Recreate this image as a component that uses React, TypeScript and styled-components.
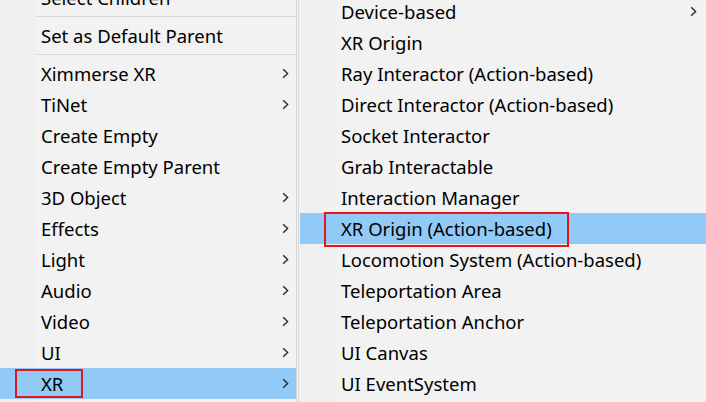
import React from 'react'
import styled, { createGlobalStyle } from 'styled-components'

const GlobalStyle = createGlobalStyle`
  html, body {
    margin: 0;
    padding: 0;
    background: #f2f2f2;
    overflow: hidden;
  }
  body {
    font-family: "Noto Sans", "Open Sans", "Noto Sans CJK SC", sans-serif;
    -webkit-font-smoothing: antialiased;
  }
`

type Entry =
  | { kind: 'item'; label: string; sub?: boolean; active?: boolean; marked?: boolean }
  | { kind: 'sep' }

const mainMenu: Entry[] = [
  { kind: 'item', label: 'Select Children' },
  { kind: 'sep' },
  { kind: 'item', label: 'Set as Default Parent' },
  { kind: 'sep' },
  { kind: 'item', label: 'Ximmerse XR', sub: true },
  { kind: 'item', label: 'TiNet', sub: true },
  { kind: 'item', label: 'Create Empty' },
  { kind: 'item', label: 'Create Empty Parent' },
  { kind: 'item', label: '3D Object', sub: true },
  { kind: 'item', label: 'Effects', sub: true },
  { kind: 'item', label: 'Light', sub: true },
  { kind: 'item', label: 'Audio', sub: true },
  { kind: 'item', label: 'Video', sub: true },
  { kind: 'item', label: 'UI', sub: true },
  { kind: 'item', label: 'XR', sub: true, active: true, marked: true },
]

const xrMenu: Entry[] = [
  { kind: 'item', label: 'Device-based', sub: true },
  { kind: 'item', label: 'XR Origin' },
  { kind: 'item', label: 'Ray Interactor (Action-based)' },
  { kind: 'item', label: 'Direct Interactor (Action-based)' },
  { kind: 'item', label: 'Socket Interactor' },
  { kind: 'item', label: 'Grab Interactable' },
  { kind: 'item', label: 'Interaction Manager' },
  { kind: 'item', label: 'XR Origin (Action-based)', active: true, marked: true },
  { kind: 'item', label: 'Locomotion System (Action-based)' },
  { kind: 'item', label: 'Teleportation Area' },
  { kind: 'item', label: 'Teleportation Anchor' },
  { kind: 'item', label: 'UI Canvas' },
  { kind: 'item', label: 'UI EventSystem' },
]

function Chevron() {
  return (
    <svg width="7" height="11" viewBox="0 0 7 11">
      <polyline
        points="1.2,1.2 5.6,5.5 1.2,9.8"
        fill="none"
        stroke="#2b2b2b"
        strokeWidth="1.4"
      />
    </svg>
  )
}

function MenuList({ entries, variant }: { entries: Entry[]; variant: 'main' | 'sub' }) {
  return (
    <>
      {entries.map((e, i) =>
        e.kind === 'sep' ? (
          <Separator key={i} />
        ) : (
          <Row key={i} $active={e.active} $variant={variant}>
            <Label>{e.label}</Label>
            {e.marked && <Mark $variant={variant} />}
            {e.sub && (
              <Arrow $variant={variant}>
                <Chevron />
              </Arrow>
            )}
          </Row>
        )
      )}
    </>
  )
}

export default function App() {
  return (
    <>
      <GlobalStyle />
      <Screen>
        <MainMenu>
          <Gutter />
          <Items $offset={-18}>
            <MenuList entries={mainMenu} variant="main" />
          </Items>
        </MainMenu>
        <SubMenu>
          <Gutter />
          <Items $offset={-4}>
            <MenuList entries={xrMenu} variant="sub" />
          </Items>
        </SubMenu>
      </Screen>
    </>
  )
}

const Screen = styled.div`
  display: flex;
  width: 706px;
  height: 402px;
  overflow: hidden;
  background: #f2f2f2;
`

const MainMenu = styled.div`
  position: relative;
  width: 296px;
  flex-shrink: 0;
  border-right: 1px solid #d6d6d6;
  background: #f2f2f2;
  overflow: hidden;
`

const SubMenu = styled.div`
  position: relative;
  flex: 1;
  margin-left: 1px;
  border-left: 1px solid #d9d9d9;
  background: #f2f2f2;
`

const Gutter = styled.div`
  position: absolute;
  top: 0;
  bottom: 0;
  left: 0;
  width: 37px;
  background: #f0f0f0;
`

const Items = styled.div<{ $offset: number }>`
  position: relative;
  display: flex;
  flex-direction: column;
  margin-top: ${p => p.$offset}px;
`

const Row = styled.div<{ $active?: boolean; $variant: 'main' | 'sub' }>`
  position: relative;
  display: flex;
  align-items: center;
  height: 31px;
  flex-shrink: 0;
  background: ${p => (p.$active ? '#91c9f7' : 'transparent')};
  margin-left: ${p => (p.$variant === 'sub' ? '1px' : '0')};
`

const Label = styled.span`
  padding-left: 41px;
  font-size: 18.5px;
  line-height: 31px;
  color: #000;
  white-space: nowrap;
`

const Arrow = styled.span<{ $variant: 'main' | 'sub' }>`
  margin-left: auto;
  margin-right: ${p => (p.$variant === 'main' ? '7px' : '9px')};
  display: flex;
  align-items: center;
`

const Mark = styled.span<{ $variant: 'main' | 'sub' }>`
  position: absolute;
  border: 2px solid #e8141b;
  box-sizing: border-box;
  ${p =>
    p.$variant === 'main'
      ? 'left: 15px; top: 1px; width: 68px; height: 29px;'
      : 'left: 24px; top: -1px; width: 245px; height: 35px;'}
`

const Separator = styled.div`
  height: 1px;
  margin: 3px 0 3px 36px;
  background: #d7d7d7;
  flex-shrink: 0;
`
